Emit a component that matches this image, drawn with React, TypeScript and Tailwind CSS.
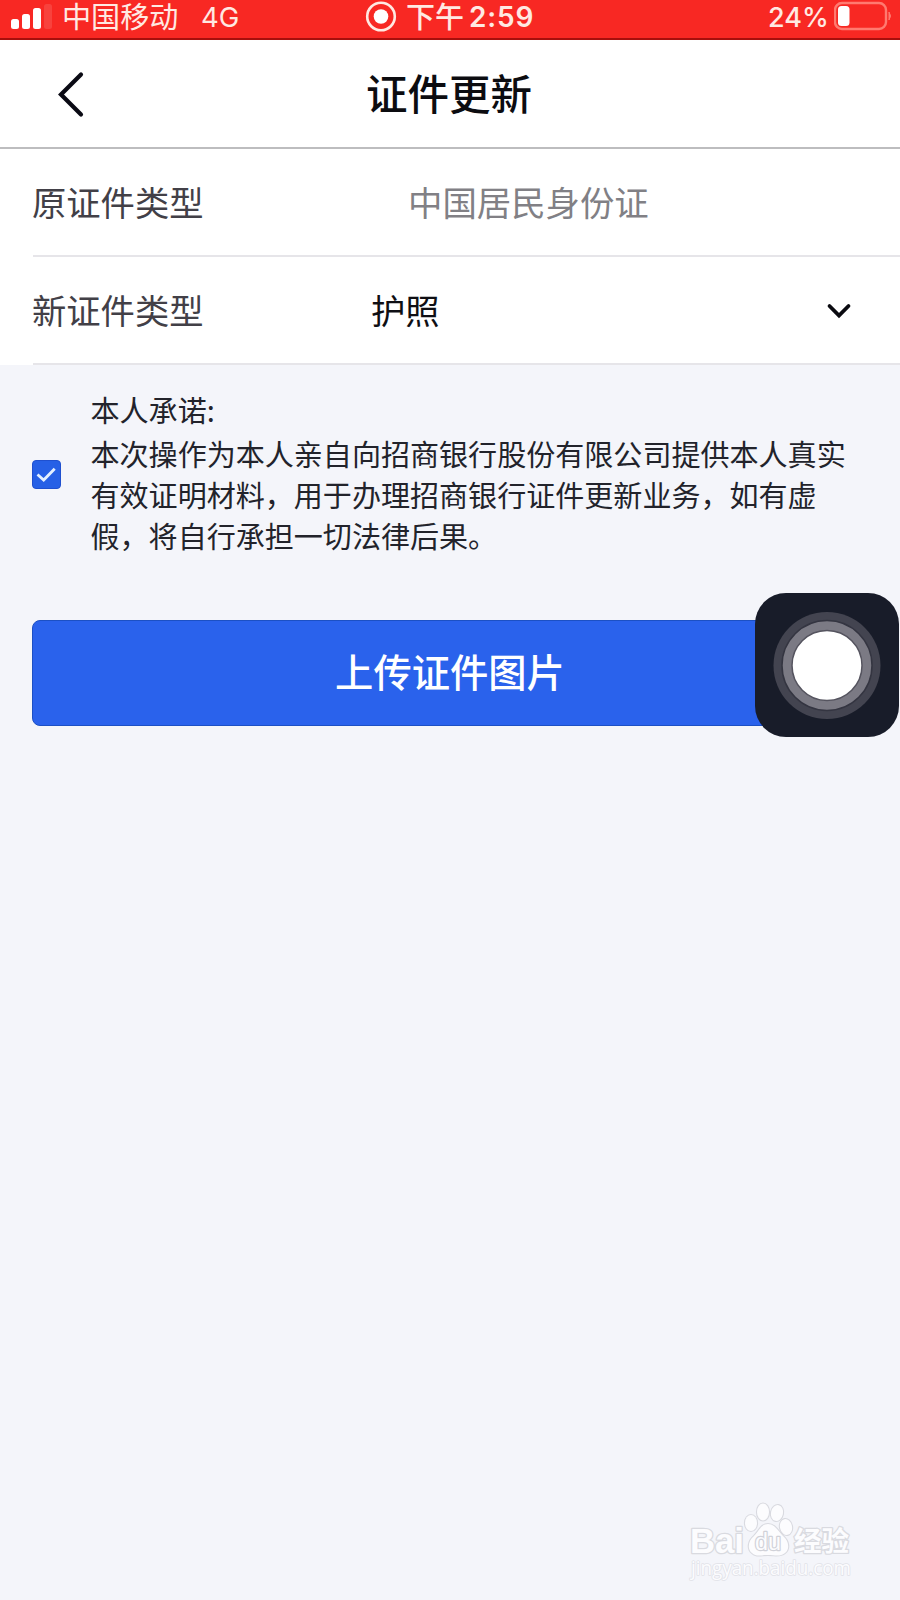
import type { ReactNode } from 'react';

function StatusBar() {
  return (
    <header className="flex h-10 items-start border-b-2 border-[#a80f0c] bg-[#f82823] text-[#ffe9e2]">
      <div className="flex h-[34px] w-[358px] shrink-0 items-center pl-[11px]">
        <svg width="44" height="34" viewBox="0 0 44 34" fill="#fff">
          <rect x="0" y="19" width="8" height="10" rx="2.5" />
          <rect x="11" y="14" width="8" height="15" rx="2.5" />
          <rect x="22" y="8" width="8" height="21" rx="2.5" />
          <rect x="33" y="4" width="8" height="25" rx="2.5" opacity="0.12" />
        </svg>
        <span className="ml-[7px] w-[139px] pb-1 text-[29.1px] leading-[30px] whitespace-nowrap">中国移动</span>
        <span className="font-['Inter'] text-[27.5px] leading-[34px]">4G</span>
      </div>
      <div className="flex h-[34px] w-[410px] shrink-0 items-center pl-[7px]">
        <svg width="32" height="32" viewBox="0 0 32 32">
          <circle cx="16" cy="15.5" r="13.8" fill="none" stroke="#ffe9e2" strokeWidth="2.6" />
          <circle cx="16" cy="15.5" r="7.3" fill="#fff" />
        </svg>
        <span className="ml-[9px] w-[63px] pb-1 text-[29px] leading-[30px] font-medium whitespace-nowrap">下午</span>
        <span className="font-['Inter'] text-[28px] leading-[34px] font-semibold tracking-[0.8px]">2:59</span>
      </div>
      <div className="flex h-[34px] items-center">
        <span className="w-[66px] pt-px font-['Inter'] text-[27px] leading-[34px] font-medium whitespace-nowrap">24%</span>
        <svg width="60" height="32" viewBox="0 0 60 32">
          <rect x="1" y="2" width="51" height="26" rx="7" fill="none" stroke="#ff7a70" strokeWidth="2.4" />
          <rect x="4" y="5" width="11.5" height="20" rx="3.5" fill="#fff" />
          <path d="M55 11 Q58 15 55 19 Z" fill="#ff7a70" stroke="#ff7a70" />
        </svg>
      </div>
    </header>
  );
}

function NavBar() {
  return (
    <nav className="flex h-[109px] items-center border-b-2 border-[#bdbdbf] bg-white">
      <div className="w-[366px] shrink-0 pl-[56px]">
        <svg width="30" height="48" viewBox="0 0 30 48" fill="none" stroke="#0a0a14" strokeWidth="4.2" strokeLinecap="round" strokeLinejoin="miter">
          <path d="M25 4.5 L5 24.5 L25 44.5" />
        </svg>
      </div>
      <h1 className="pb-[3px] text-[41.5px] leading-[60px] font-medium text-[#0c0c10]">证件更新</h1>
    </nav>
  );
}

function Row({ label, children }: { label: string; children: ReactNode }) {
  return (
    <div className="bg-white pl-[33px]">
      <div className="flex h-[108px] items-center border-b-2 border-[#e6e5e9] pb-[3px]">
        <span className="-ml-px w-[339px] shrink-0 text-[34.3px] leading-[50px] text-[#424047]">{label}</span>
        {children}
      </div>
    </div>
  );
}

function Agreement() {
  return (
    <section className="flex items-start pl-8">
      <svg className="mt-[95px] shrink-0" width="29" height="29" viewBox="0 0 29 29">
        <rect x="0.5" y="0.5" width="28" height="28" rx="3.5" fill="#2660e6" stroke="#1f50cf" />
        <path d="M5.5 14.5 L11.7 20 L22.7 8.7" fill="none" stroke="#e4f0ff" strokeWidth="2.8" />
      </svg>
      <div className="ml-[29.5px] text-[29.06px] leading-[41.3px] whitespace-nowrap text-[#22232b]">
        <p className="mt-6 mb-[2.5px]">本人承诺:</p>
        <p>
          本次操作为本人亲自向招商银行股份有限公司提供本人真实
          <br />
          有效证明材料，用于办理招商银行证件更新业务，如有虚
          <br />
          假，将自行承担一切法律后果。
        </p>
      </div>
    </section>
  );
}

function AssistiveTouch() {
  return (
    <div className="absolute top-[593px] left-[755px] flex size-[144px] items-center justify-center rounded-[31px] bg-[#181c29]">
      <svg width="108" height="108" viewBox="0 0 108 108">
        <circle cx="54" cy="54.5" r="53.5" fill="#434450" />
        <circle cx="54" cy="54.5" r="45" fill="#7b7a84" stroke="#343541" strokeWidth="1.5" />
        <circle cx="54" cy="54.5" r="35" fill="#fff" stroke="#55545f" strokeWidth="1.5" />
      </svg>
    </div>
  );
}

function Watermark() {
  return (
    <svg
      className="absolute top-[1495px] left-[684px]"
      width="176"
      height="90"
      viewBox="0 0 176 90"
      fill="#fcfcfe"
      stroke="#d9dae0"
      strokeWidth="2.6"
      strokeLinejoin="round"
      paintOrder="stroke"
    >
      <text x="6" y="58" fontFamily="Liberation Sans" fontWeight="bold" fontSize="35" textLength="54" lengthAdjust="spacingAndGlyphs">Bai</text>
      <g strokeWidth="2.2">
        <ellipse cx="67" cy="28" rx="6" ry="8" />
        <ellipse cx="79" cy="17" rx="6" ry="8.5" />
        <ellipse cx="93" cy="18" rx="6" ry="8" transform="rotate(12 93 18)" />
        <ellipse cx="102" cy="32" rx="6" ry="8" transform="rotate(-12 102 32)" />
        <path d="M84 29 C91 29 94 36 99 41 C105 46 106 54 101 58 C96 62 91 60 84 60 C77 60 72 62 68 58 C63 54 64 46 70 41 C75 36 77 29 84 29 Z" />
      </g>
      <text x="71" y="54.5" fontFamily="Liberation Sans" fontSize="23" strokeWidth="2.4" stroke="#d0d1d8" textLength="26" lengthAdjust="spacingAndGlyphs">du</text>
      <text x="110" y="56" fontFamily="Noto Sans CJK SC" fontWeight="bold" fontSize="27.5">经验</text>
      <text x="7" y="80" fontFamily="Open Sans" fontSize="19.5" strokeWidth="1.6" stroke="#e1e2e8" textLength="160" lengthAdjust="spacingAndGlyphs">jingyan.baidu.com</text>
    </svg>
  );
}

export default function App() {
  return (
    <div className="relative h-[1600px] w-[900px] overflow-hidden bg-[#f4f5fa] font-['Noto_Sans_CJK_SC',sans-serif]">
      <StatusBar />
      <NavBar />
      <main>
        <Row label="原证件类型">
          <span className="pl-[37px] text-[34.4px] leading-[50px] text-[#818085]">中国居民身份证</span>
        </Row>
        <Row label="新证件类型">
          <span className="flex-1 text-[34.3px] leading-[50px] text-[#0f0f14]">护照</span>
          <svg className="mt-[5px] mr-[48px]" width="26" height="18" viewBox="0 0 26 18" fill="none" stroke="#0a0a10" strokeWidth="3.8" strokeLinecap="round">
            <path d="M3.5 4 L13 13.5 L22.5 4" />
          </svg>
        </Row>
        <Agreement />
        <div className="px-[32px] pt-[63px]">
          <button className="h-[106px] w-full rounded-[8px] border border-[#1c50c4] bg-[#2a62ec] pb-[3px] text-[38.3px] leading-[56px] font-medium text-white">
            上传证件图片
          </button>
        </div>
      </main>
      <AssistiveTouch />
      <Watermark />
    </div>
  );
}
